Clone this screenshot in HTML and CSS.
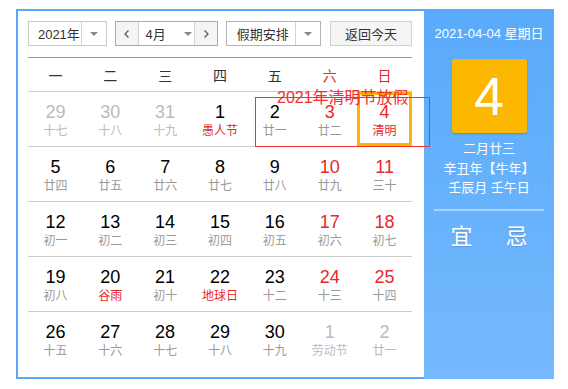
FILE: index.html
```html
<!DOCTYPE html>
<html lang="zh-CN">
<head>
  <meta charset="UTF-8" />
  <meta name="viewport" content="width=device-width, initial-scale=1.0"/>
  <title>万年历</title>
  <link rel="stylesheet" href="styles.css">
</head>
<body>
  <div class="calendario">
    <div class="principal">
      <!-- barra de controles -->
      <div class="barra">
        <div class="seletor seletor-ano">
          <span class="seletor-texto">2021年</span>
          <span class="seletor-seta"><i class="triangulo"></i></span>
        </div>
        <div class="seletor seletor-mes">
          <span class="botao-mes">
            <svg viewBox="0 0 10 10"><path d="M6.5 1.5L3 5l3.5 3.5"/></svg>
          </span>
          <span class="mes-texto">4月 <i class="triangulo"></i></span>
          <span class="botao-mes">
            <svg viewBox="0 0 10 10"><path d="M3.5 1.5L7 5L3.5 8.5"/></svg>
          </span>
        </div>
        <div class="seletor seletor-feriado">
          <span class="seletor-texto">假期安排</span>
          <span class="seletor-seta"><i class="triangulo"></i></span>
        </div>
        <button class="botao-hoje">返回今天</button>
      </div>

      <div class="semana-titulo">
        <span>一</span><span>二</span><span>三</span><span>四</span><span>五</span>
        <span class="vermelho">六</span><span class="vermelho">日</span>
      </div>

      <div class="semana">
        <div class="dia fora"><b>29</b><small>十七</small></div>
        <div class="dia fora"><b>30</b><small>十八</small></div>
        <div class="dia fora"><b>31</b><small>十九</small></div>
        <div class="dia"><b>1</b><small class="festa">愚人节</small></div>
        <div class="dia"><b>2</b><small>廿一</small></div>
        <div class="dia fim"><b>3</b><small>廿二</small></div>
        <div class="dia fim selecionado"><b>4</b><small class="festa">清明</small></div>
      </div>
      <div class="semana">
        <div class="dia"><b>5</b><small>廿四</small></div>
        <div class="dia"><b>6</b><small>廿五</small></div>
        <div class="dia"><b>7</b><small>廿六</small></div>
        <div class="dia"><b>8</b><small>廿七</small></div>
        <div class="dia"><b>9</b><small>廿八</small></div>
        <div class="dia fim"><b>10</b><small>廿九</small></div>
        <div class="dia fim"><b>11</b><small>三十</small></div>
      </div>
      <div class="semana">
        <div class="dia"><b>12</b><small>初一</small></div>
        <div class="dia"><b>13</b><small>初二</small></div>
        <div class="dia"><b>14</b><small>初三</small></div>
        <div class="dia"><b>15</b><small>初四</small></div>
        <div class="dia"><b>16</b><small>初五</small></div>
        <div class="dia fim"><b>17</b><small>初六</small></div>
        <div class="dia fim"><b>18</b><small>初七</small></div>
      </div>
      <div class="semana">
        <div class="dia"><b>19</b><small>初八</small></div>
        <div class="dia"><b>20</b><small class="festa">谷雨</small></div>
        <div class="dia"><b>21</b><small>初十</small></div>
        <div class="dia"><b>22</b><small class="festa">地球日</small></div>
        <div class="dia"><b>23</b><small>十二</small></div>
        <div class="dia fim"><b>24</b><small>十三</small></div>
        <div class="dia fim"><b>25</b><small>十四</small></div>
      </div>
      <div class="semana">
        <div class="dia"><b>26</b><small>十五</small></div>
        <div class="dia"><b>27</b><small>十六</small></div>
        <div class="dia"><b>28</b><small>十七</small></div>
        <div class="dia"><b>29</b><small>十八</small></div>
        <div class="dia"><b>30</b><small>十九</small></div>
        <div class="dia fora"><b>1</b><small>劳动节</small></div>
        <div class="dia fora"><b>2</b><small>廿一</small></div>
      </div>
    </div>

    <!-- painel lateral -->
    <div class="lateral">
      <div class="data-completa">2021-04-04 星期日</div>
      <div class="dia-grande">4</div>
      <div class="lunar">
        <div>二月廿三</div>
        <div>辛丑年【牛年】</div>
        <div>壬辰月 壬午日</div>
      </div>
      <div class="divisor"></div>
      <div class="yi-ji">
        <span>宜</span><span>忌</span>
      </div>
    </div>

    <!-- marcação do feriado -->
    <div class="feriado-caixa"></div>
    <div class="feriado-texto">2021年清明节放假</div>
  </div>
</body>
</html>
```

FILE: styles.css
```css
body {
  margin: 0;
  font-family: "Liberation Sans", "Noto Sans CJK SC", sans-serif;
  background: white;
}

.calendario {
  position: relative;
  display: flex;
  margin: 9px 0 0 16px;
  width: 538px;
  height: 370px;
}

.principal {
  width: 408px;
  height: 370px;
  box-sizing: border-box;
  border: 2px solid #5ba8f8;
  border-right: none;
  padding: 10px 12px 0 10px;
}

/* BARRA */
.barra {
  display: flex;
  height: 25px;
  padding-bottom: 11px;
  border-bottom: 1px solid #5ba8f8;
  font-size: 13px;
  color: #333;
}

.seletor {
  display: flex;
  height: 25px;
  box-sizing: border-box;
  border: 1px solid #c8c8c8;
  margin-right: 8px;
}

.seletor-ano {
  width: 79px;
}

.seletor-ano .seletor-texto {
  padding-left: 8px;
}

.seletor-feriado {
  width: 95px;
  border-color: #b4b4b4;
  margin-right: 9px;
}

.seletor-feriado .seletor-texto {
  padding-left: 3px;
}

.seletor-texto {
  flex: 1;
  display: flex;
  align-items: center;
  justify-content: center;
}

.seletor-seta {
  width: 24px;
  border-left: 1px solid #d4d4d4;
  display: flex;
  align-items: center;
  justify-content: center;
}

.triangulo {
  display: inline-block;
  width: 0;
  height: 0;
  border-left: 4px solid transparent;
  border-right: 4px solid transparent;
  border-top: 4px solid #888;
}

.seletor-mes {
  width: 104px;
  border-color: #aaa;
}

.botao-mes {
  width: 22px;
  background: #f4f4f4;
  display: flex;
  align-items: center;
  justify-content: center;
}

.botao-mes:first-child {
  border-right: 1px solid #d4d4d4;
}

.botao-mes:last-child {
  border-left: 1px solid #d4d4d4;
}

.botao-mes svg {
  width: 10px;
  height: 10px;
  fill: none;
  stroke: #555;
  stroke-width: 1.2;
}

.mes-texto {
  flex: 1;
  display: flex;
  align-items: center;
  justify-content: center;
  gap: 18px;
  padding-left: 4px;
}

.botao-hoje {
  width: 82px;
  height: 25px;
  box-sizing: border-box;
  border: 1px solid #d0d0d0;
  background: #f5f5f5;
  font-family: inherit;
  font-size: 13px;
  color: #333;
  padding: 0;
}

/* GRADE */
.semana-titulo {
  display: grid;
  grid-template-columns: repeat(7, 1fr);
  height: 33px;
  align-items: center;
  text-align: center;
  border-bottom: 1px solid #ccc;
  font-size: 14px;
  color: #333;
}

.vermelho {
  color: #e8272b;
}

.semana {
  display: grid;
  grid-template-columns: repeat(7, 1fr);
  height: 55px;
  box-sizing: border-box;
  border-bottom: 1px solid #ccc;
}

.semana:last-child {
  border-bottom: none;
}

.dia {
  display: flex;
  flex-direction: column;
  align-items: center;
  padding-top: 10px;
}

.dia b {
  font-weight: normal;
  font-size: 18px;
  line-height: 20px;
  color: #000;
}

.dia small {
  font-size: 12px;
  line-height: 16px;
  margin-top: 1px;
  color: #999;
}

.dia.fim b {
  color: #e8272b;
}

.dia small.festa {
  color: #e8272b;
}

.dia.fora b,
.dia.fora small {
  color: #bbb;
}

.selecionado {
  box-shadow: inset 0 0 0 3px #fbb700;
}

/* LATERAL */
.lateral {
  width: 130px;
  height: 370px;
  background: linear-gradient(#59aafa, #74b9fe);
  color: white;
  display: flex;
  flex-direction: column;
  align-items: center;
  padding-top: 17px;
  box-sizing: border-box;
}

.data-completa {
  font-size: 13px;
  line-height: 16px;
}

.dia-grande {
  margin-top: 17px;
  width: 75px;
  height: 74px;
  background: #fcb800;
  border-radius: 3px;
  box-shadow: 0 1px 2px rgba(0, 0, 0, 0.2);
  font-size: 54px;
  line-height: 74px;
  text-align: center;
}

.lunar {
  margin-top: 6px;
  font-size: 13px;
  line-height: 19.5px;
  text-align: center;
}

.divisor {
  margin-top: 11px;
  width: 110px;
  height: 2px;
  background: rgba(255, 255, 255, 0.45);
}

.yi-ji {
  margin-top: 13px;
  width: 110px;
  display: flex;
  font-size: 22px;
  line-height: 26px;
  text-shadow: 0 1px 1px rgba(0, 0, 0, 0.15);
}

.yi-ji span {
  flex: 1;
  text-align: center;
}

/* FERIADO */
.feriado-caixa {
  position: absolute;
  left: 239px;
  top: 88px;
  width: 175px;
  height: 50px;
  box-sizing: border-box;
  border: 1px solid #f23030;
}

.feriado-texto {
  position: absolute;
  left: 261px;
  top: 80px;
  font-size: 16px;
  line-height: 18px;
  color: #f23030;
  white-space: nowrap;
}
```
